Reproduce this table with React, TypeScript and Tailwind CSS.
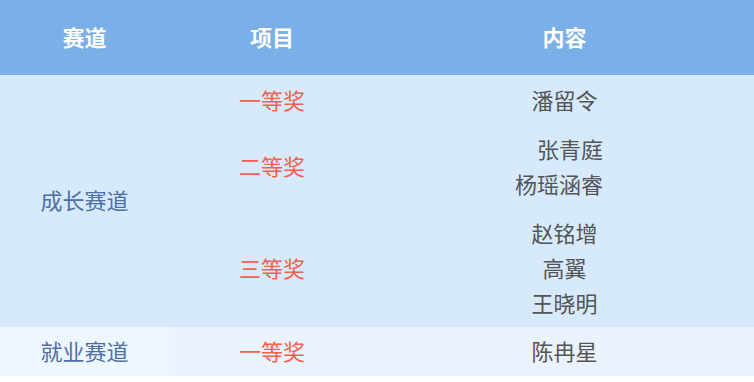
import React from "react";

const red = "text-[#f2604e]";

const App = () => {
  return (
    <div className="w-[754px] h-[382px] bg-white font-['Noto_Sans_CJK_SC','Noto_Sans',sans-serif] text-[22px] leading-[35px]">
      {/* Header */}
      <div className="grid grid-cols-[169px_206px_379px] h-[75px] pb-[3px] bg-[#7aafe7] text-white font-bold items-center text-center">
        <div>赛道</div>
        <div>项目</div>
        <div>内容</div>
      </div>

      {/* 成长赛道 */}
      <div className="grid grid-cols-[169px_206px_379px] bg-[#d6eafc] text-center">
        <div className="row-span-3 flex items-center justify-center pb-[3px] text-[#4d6fa8]">成长赛道</div>

        <div className={`h-[52px] flex items-center justify-center pb-[3px] ${red}`}>一等奖</div>
        <div className="h-[52px] flex items-center justify-center pb-[3px] text-[#555]">潘留令</div>

        <div className={`h-[80px] flex items-center justify-center pb-[3px] ${red}`}>二等奖</div>
        <div className="h-[80px] flex flex-col items-center justify-center pb-[3px] text-[#555]">
          <span className="pl-[11px]">张青庭</span>
          <span className="pr-[11px]">杨瑶涵睿</span>
        </div>

        <div className={`h-[120px] flex items-center justify-center ${red}`}>三等奖</div>
        <div className="h-[120px] flex flex-col items-center justify-center text-[#555]">
          <span>赵铭增</span>
          <span>高翼</span>
          <span>王晓明</span>
        </div>
      </div>

      {/* 就业赛道 */}
      <div className="grid grid-cols-[169px_206px_379px] h-[49px] text-center items-stretch">
        <div className="bg-[#eef6ff] flex items-center justify-center pb-[3px] text-[#4d6fa8]">就业赛道</div>
        <div className={`bg-[#e9f2fd] flex items-center justify-center pb-[3px] ${red}`}>一等奖</div>
        <div className="bg-[#e9f2fd] flex items-center justify-center pb-[3px] text-[#555]">陈冉星</div>
      </div>
    </div>
  );
};

export default App;
